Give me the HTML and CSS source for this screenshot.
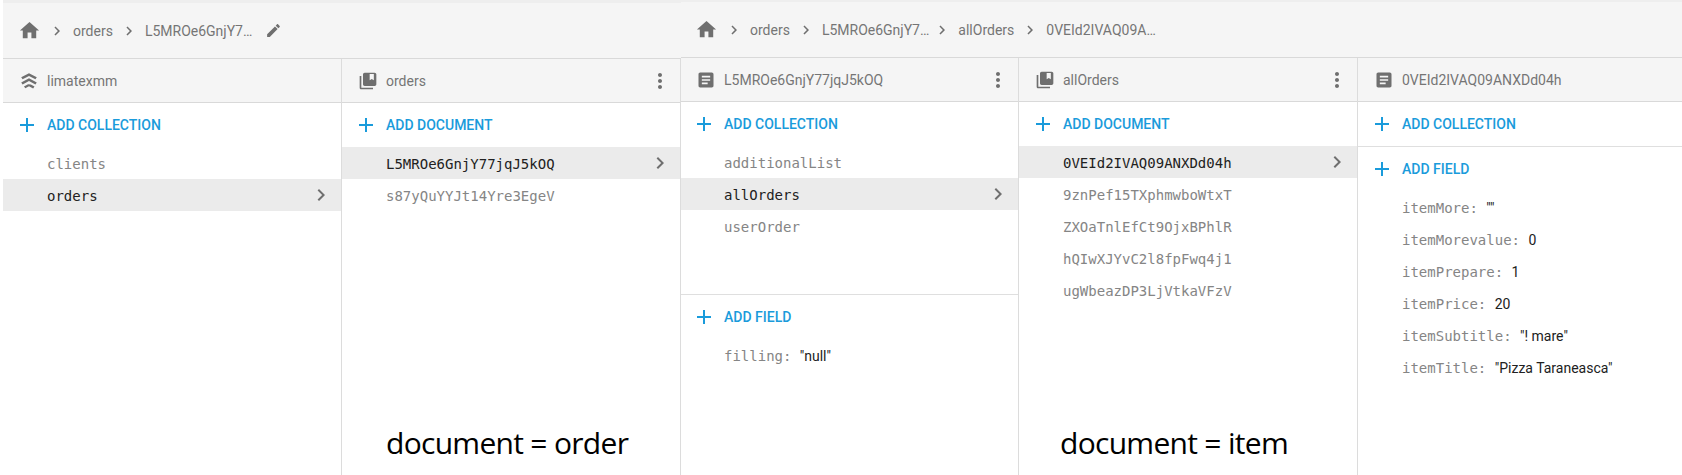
FILE: index.html
```html
<!DOCTYPE html>
<html lang="en">
<head>
<meta charset="utf-8">
<title>Firestore data</title>
<link rel="stylesheet" href="styles.css">
</head>
<body>
<svg class="defs" width="0" height="0" aria-hidden="true">
  <symbol id="i-home" viewBox="0 0 24 24"><path d="M10 20v-6h4v6h5v-8h3L12 3 2 12h3v8z"/></symbol>
  <symbol id="i-chev" viewBox="0 0 24 24"><path d="M10 6L8.59 7.41 13.17 12l-4.58 4.59L10 18l6-6z"/></symbol>
  <symbol id="i-edit" viewBox="0 0 24 24"><path d="M3 17.25V21h3.75L17.81 9.94l-3.75-3.75L3 17.25zM20.71 7.04c.39-.39.39-1.02 0-1.41l-2.34-2.34c-.39-.39-1.02-.39-1.41 0l-1.83 1.83 3.75 3.75 1.83-1.83z"/></symbol>
  <symbol id="i-coll" viewBox="0 0 24 24"><path d="M4 6H2v14c0 1.1.9 2 2 2h14v-2H4V6z"/><path d="M20 2H8c-1.1 0-2 .9-2 2v12c0 1.1.9 2 2 2h12c1.1 0 2-.9 2-2V4c0-1.1-.9-2-2-2zm-1 9l-2.500-1.500L14 11V3.500h5V11z"/></symbol>
  <symbol id="i-doc" viewBox="0 0 24 24"><path d="M19 3H5c-1.100 0-2 .9-2 2v14c0 1.100.9 2 2 2h14c1.100 0 2-.9 2-2V5c0-1.100-.9-2-2-2zm-5 14H7v-2h7v2zm3-4H7v-2h10v2zm0-4H7V7h10v2z"/></symbol>
  <symbol id="i-plus" viewBox="0 0 24 24"><path d="M19 13h-6v6h-2v-6H5v-2h6V5h2v6h6v2z"/></symbol>
  <symbol id="i-more" viewBox="0 0 24 24"><path d="M12 8c1.100 0 2-.9 2-2s-.9-2-2-2-2 .9-2 2 .9 2 2 2zm0 2c-1.100 0-2 .9-2 2s.9 2 2 2 2-.9 2-2-.9-2-2-2zm0 6c-1.100 0-2 .9-2 2s.9 2 2 2 2-.9 2-2-.9-2-2-2z"/></symbol>
  <symbol id="i-proj" viewBox="0 0 24 24"><path d="M12 3.500L3.500 8l1.500 2.200L12 6.600l7 3.600L20.500 8z"/><path d="M12 9L3.500 13.500 5 15.700l7-3.600 7 3.600 1.500-2.200z"/><path d="M11 15.500L6.500 18l1.500 2 4-2.200 4.500 2.400 1.500-2.200-4-2.200z"/></symbol>
</svg>

<main class="shots">
  <section class="shot shot-left">
    <nav class="crumbs">
      <svg class="ic home"><use href="#i-home"/></svg>
      <svg class="ic chev"><use href="#i-chev"/></svg><span class="crumb">orders</span>
      <svg class="ic chev"><use href="#i-chev"/></svg><span class="crumb">L5MROe6GnjY7…</span>
      <svg class="ic edit"><use href="#i-edit"/></svg>
    </nav>
    <div class="cols">
      <div class="col">
        <header class="col-head"><svg class="ic head-ic proj"><use href="#i-proj"/></svg><span class="col-title">limatexmm</span></header>
        <button class="action"><svg class="ic plus"><use href="#i-plus"/></svg>ADD COLLECTION</button>
        <ul class="list">
          <li class="row">clients</li>
          <li class="row sel">orders<svg class="ic row-chev"><use href="#i-chev"/></svg></li>
        </ul>
      </div>
      <div class="col">
        <header class="col-head"><svg class="ic head-ic"><use href="#i-coll"/></svg><span class="col-title">orders</span><svg class="ic kebab"><use href="#i-more"/></svg></header>
        <button class="action"><svg class="ic plus"><use href="#i-plus"/></svg>ADD DOCUMENT</button>
        <ul class="list">
          <li class="row sel">L5MROe6GnjY77jqJ5kOQ<svg class="ic row-chev"><use href="#i-chev"/></svg></li>
          <li class="row">s87yQuYYJt14Yre3EgeV</li>
        </ul>
        <p class="note">document = order</p>
      </div>
    </div>
  </section>

  <section class="shot shot-right">
    <nav class="crumbs">
      <svg class="ic home"><use href="#i-home"/></svg>
      <svg class="ic chev"><use href="#i-chev"/></svg><span class="crumb">orders</span>
      <svg class="ic chev"><use href="#i-chev"/></svg><span class="crumb c-id">L5MROe6GnjY7…</span>
      <svg class="ic chev"><use href="#i-chev"/></svg><span class="crumb">allOrders</span>
      <svg class="ic chev"><use href="#i-chev"/></svg><span class="crumb">0VEId2IVAQ09A…</span>
    </nav>
    <div class="cols">
      <div class="col col-first">
        <header class="col-head"><svg class="ic head-ic"><use href="#i-doc"/></svg><span class="col-title">L5MROe6GnjY77jqJ5kOQ</span><svg class="ic kebab"><use href="#i-more"/></svg></header>
        <div class="upper">
          <button class="action"><svg class="ic plus"><use href="#i-plus"/></svg>ADD COLLECTION</button>
          <ul class="list">
            <li class="row">additionalList</li>
            <li class="row sel">allOrders<svg class="ic row-chev"><use href="#i-chev"/></svg></li>
            <li class="row">userOrder</li>
          </ul>
        </div>
        <button class="action"><svg class="ic plus"><use href="#i-plus"/></svg>ADD FIELD</button>
        <ul class="list">
          <li class="row field">filling: <span class="val">"null"</span></li>
        </ul>
      </div>
      <div class="col">
        <header class="col-head"><svg class="ic head-ic"><use href="#i-coll"/></svg><span class="col-title">allOrders</span><svg class="ic kebab"><use href="#i-more"/></svg></header>
        <button class="action"><svg class="ic plus"><use href="#i-plus"/></svg>ADD DOCUMENT</button>
        <ul class="list">
          <li class="row sel">0VEId2IVAQ09ANXDd04h<svg class="ic row-chev"><use href="#i-chev"/></svg></li>
          <li class="row">9znPef15TXphmwboWtxT</li>
          <li class="row">ZXOaTnlEfCt9OjxBPhlR</li>
          <li class="row">hQIwXJYvC2l8fpFwq4j1</li>
          <li class="row">ugWbeazDP3LjVtkaVFzV</li>
        </ul>
        <p class="note note-item">document = item</p>
      </div>
      <div class="col col-last">
        <header class="col-head"><svg class="ic head-ic"><use href="#i-doc"/></svg><span class="col-title">0VEId2IVAQ09ANXDd04h</span></header>
        <button class="action action-ruled"><svg class="ic plus"><use href="#i-plus"/></svg>ADD COLLECTION</button>
        <button class="action"><svg class="ic plus"><use href="#i-plus"/></svg>ADD FIELD</button>
        <ul class="list">
          <li class="row field">itemMore: <span class="val">""</span></li>
          <li class="row field">itemMorevalue: <span class="val">0</span></li>
          <li class="row field">itemPrepare: <span class="val">1</span></li>
          <li class="row field">itemPrice: <span class="val">20</span></li>
          <li class="row field">itemSubtitle: <span class="val">"! mare"</span></li>
          <li class="row field">itemTitle: <span class="val">"Pizza Taraneasca"</span></li>
        </ul>
      </div>
    </div>
  </section>
</main>
</body>
</html>
```

FILE: styles.css
```css
* { box-sizing: border-box; }

html, body {
  margin: 0;
  height: 100%;
  overflow: hidden;
  background: #fff;
}

.defs { position: absolute; }

.shots {
  display: flex;
  height: 475px;
  font-family: Roboto, "Liberation Sans", sans-serif;
  font-size: 14px;
  color: #757575;
}

.shot {
  display: flex;
  flex-direction: column;
}

.shot-left {
  width: 678px;
  margin-left: 3px;
  border-top: 3px solid #eeeeee;
}

.shot-right {
  flex: 1;
  border-top: 2px solid #eeeeee;
}

.ic {
  display: block;
  flex: none;
  fill: #6f6f6f;
}

.crumbs {
  display: flex;
  align-items: center;
  flex: none;
  height: 56px;
  padding-left: 15px;
  background: #f5f5f5;
  border-bottom: 1px solid #d9d9d9;
}

.shot-right .crumbs { padding-left: 14px; }

.home { width: 23px; height: 23px; }

.chev {
  width: 18px;
  height: 18px;
  margin: 0 7px;
}

.crumb { white-space: nowrap; }

.c-id { margin-right: -3px; }

.edit {
  width: 17px;
  height: 17px;
  margin-left: 13px;
}

.cols {
  display: flex;
  flex: 1;
  min-height: 0;
}

.col {
  --inset: 0px;
  display: flex;
  flex-direction: column;
  width: 339px;
  border-right: 1px solid #dcdcdc;
}

.col-first { --inset: 1px; width: 338px; }
.col-last { flex: 1; width: auto; border-right: 0; }

.col-head {
  display: flex;
  align-items: center;
  flex: none;
  height: 44px;
  padding: 0 8px 0 calc(16px - var(--inset));
  background: #f5f5f5;
  border-bottom: 1px solid #d9d9d9;
}

.head-ic {
  width: 20px;
  height: 20px;
  margin-right: 8px;
}

.proj {
  width: 22px;
  height: 22px;
  margin-left: -1px;
  margin-right: 7px;
}

.col-title {
  flex: 1;
  white-space: nowrap;
}

.kebab {
  width: 24px;
  height: 24px;
}

.action {
  display: flex;
  align-items: center;
  flex: none;
  width: 100%;
  height: 44px;
  padding: 0 0 0 calc(12px - var(--inset));
  border: 0;
  background: none;
  font: 500 14px Roboto, "Liberation Sans", sans-serif;
  color: #1a9bdb;
}

.action-ruled {
  height: 45px;
  border-bottom: 1px solid #dfdfdf;
}

.plus {
  width: 24px;
  height: 24px;
  margin-right: 8px;
  fill: #1a9bdb;
}

.list {
  margin: 0;
  padding: 0;
  list-style: none;
  flex: none;
}

.row {
  display: flex;
  align-items: center;
  justify-content: space-between;
  height: 32px;
  padding: 2px 8px 0 calc(44px - var(--inset));
  font-family: "DejaVu Sans Mono", monospace;
  font-size: 14px;
  color: #858585;
}

.sel {
  background: #ebebeb;
  color: #212121;
}

.field {
  justify-content: flex-start;
  white-space: pre;
}

.val {
  font-family: Roboto, "Liberation Sans", sans-serif;
  font-size: 14px;
  color: #212121;
}

.row-chev {
  width: 24px;
  height: 24px;
  margin-top: -2px;
}

.upper {
  flex: none;
  height: 193px;
  border-bottom: 1px solid #dfdfdf;
}

.note {
  margin: auto 0 14px 44px;
  font-family: "Open Sans", sans-serif;
  font-size: 30px;
  letter-spacing: -0.7px;
  line-height: 36px;
  color: #000;
}

.note-item { margin-left: 41px; }
```
